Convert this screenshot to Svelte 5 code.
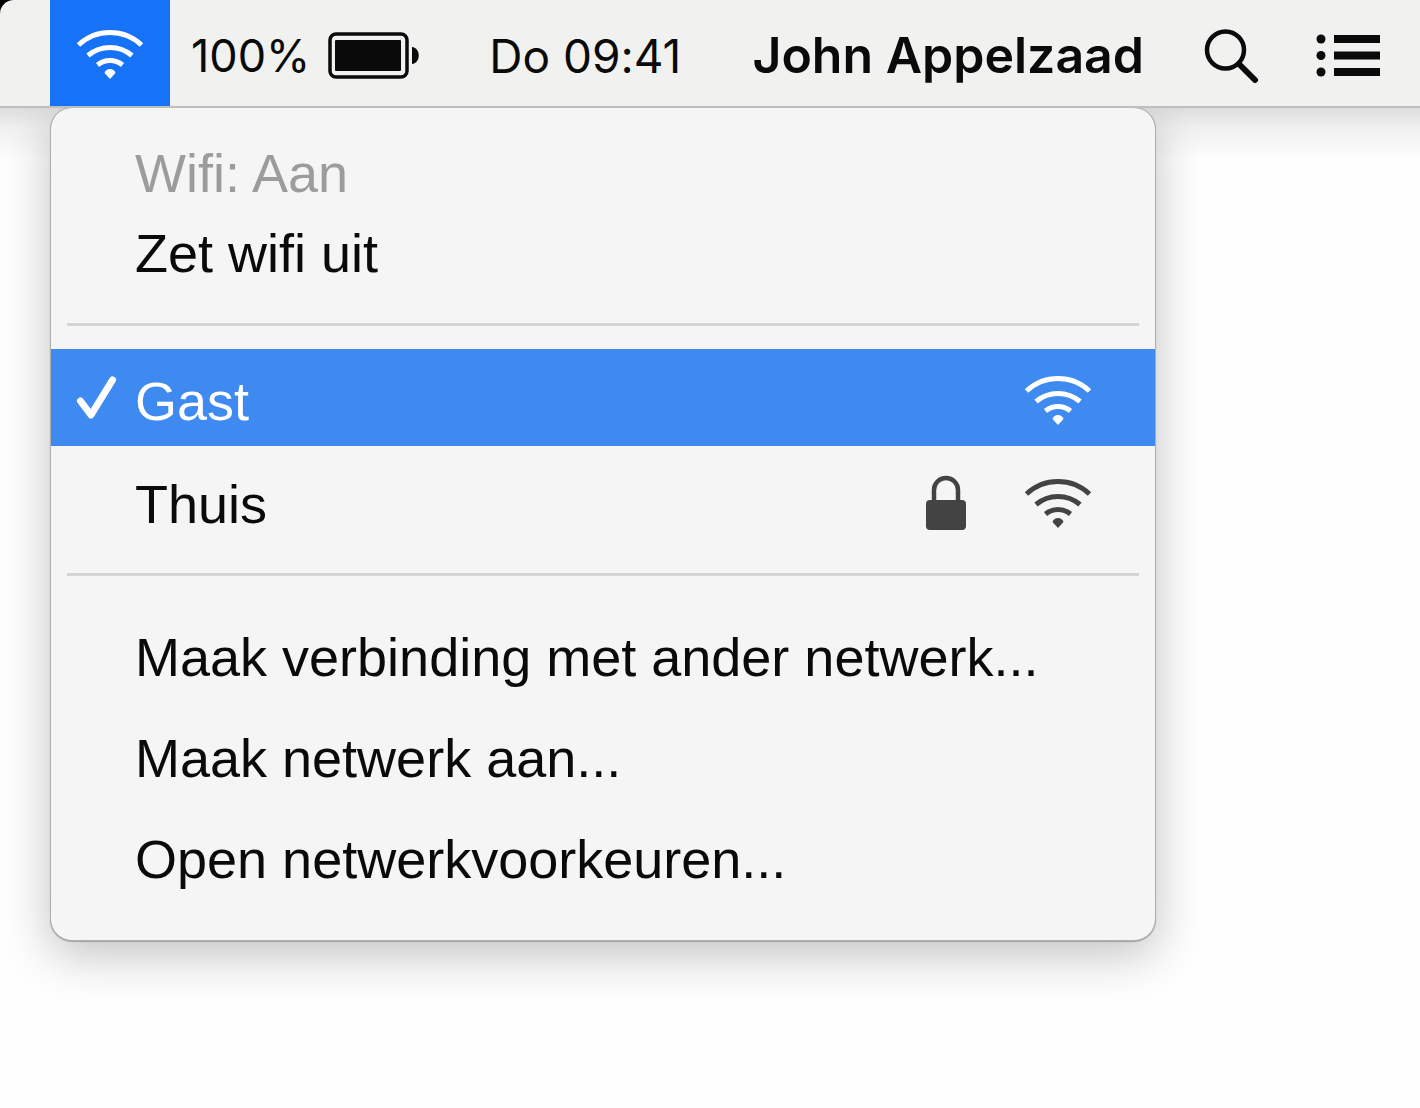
<style>
  :global(body) {
    margin: 0;
    background: #fefefe;
  }

  .screen {
    color: #0a0a0a;
    font-family: "Liberation Sans", Arial, sans-serif;
    font-variant-ligatures: none;
  }

  button {
    margin: 0;
    padding: 0;
    border: 0;
    background: none;
    color: inherit;
    font: inherit;
    text-align: left;
    cursor: default;
  }

  svg {
    display: block;
    flex: none;
  }

  .bezel {
    background: #000;
  }

  .bar {
    display: flex;
    align-items: center;
    height: 106px;
    padding: 0 38px 0 50px;
    border-bottom: 2px solid #bebebe;
    border-top-left-radius: 14px;
    background: #f1f1f0;
    font-family: Inter, "Liberation Sans", sans-serif;
    font-size: 46px;
    white-space: nowrap;
  }

  .bar button {
    display: flex;
    align-items: center;
    box-sizing: border-box;
    height: 100%;
    padding-top: 5px;
  }

  .bar .wifi {
    justify-content: center;
    width: 120px;
    padding-top: 2px;
    background: #1673f7;
    color: #fff;
  }

  .bar .battery {
    gap: 18px;
    margin-left: 21px;
  }

  .bar .charge {
    font-size: 45px;
  }

  .bar .clock {
    margin-left: 69px;
  }

  .bar .user {
    margin-left: auto;
    padding-top: 3px;
    font-size: 50px;
    font-weight: 600;
  }

  .bar .search {
    margin-left: 60px;
  }

  .bar .list {
    margin-left: 56px;
  }

  .desktop {
    overflow: hidden;
    padding: 0 264px 120px 50px;
    background: linear-gradient(#dedede, #f0f0f0 20px, #fefefe 52px);
  }

  .menu {
    margin-top: -1px;
    padding: 26px 0 30px;
    border: 1px solid #b0b0b0;
    border-radius: 22px;
    background: #f5f5f5;
    background-clip: padding-box;
    box-shadow: 0 1px 1px rgba(0, 0, 0, .25), 0 14px 48px rgba(0, 0, 0, .24);
    font-size: 54px;
    line-height: 64px;
  }

  .menu ul {
    margin: 0;
    padding: 0;
    list-style: none;
  }

  .menu hr {
    height: 3px;
    margin: 29px 16px 23px;
    border: 0;
    background: #d4d4d4;
  }

  .menu .networks + hr {
    margin: 17px 16px 31px;
  }

  .row {
    display: flex;
    align-items: center;
    box-sizing: border-box;
    width: 100%;
    height: 80px;
    padding-right: 63px;
  }

  .mark {
    flex: none;
    width: 60px;
    margin-left: 24px;
  }

  .label {
    flex: 1;
    padding-bottom: 2px;
  }

  .icons {
    display: flex;
    align-items: center;
    gap: 57px;
    color: #434343;
  }

  .row:disabled {
    color: #9c9c9c;
  }

  .networks .row {
    height: 110px;
    padding-top: 4px;
  }

  .networks .label {
    padding: 2px 0 0;
  }

  .networks .row.selected {
    height: 97px;
    background: #3e8af0;
    color: #fff;
  }

  .selected .icons {
    color: #fff;
  }

  .actions .row {
    height: 101px;
  }
</style>

<script>
  const networks = [
    { name: 'Gast', locked: false },
    { name: 'Thuis', locked: true },
  ];

  const actions = [
    'Maak verbinding met ander netwerk...',
    'Maak netwerk aan...',
    'Open netwerkvoorkeuren...',
  ];

  let current = $state('Gast');
</script>

{#snippet wifiIcon()}
  <svg width="68" height="52" viewBox="0 0 68 52" fill="none" stroke="currentColor" stroke-width="5" aria-hidden="true">
    <path d="M2.500 17A46 46 0 0 1 65.500 17" />
    <path d="M12 27.500A34 34 0 0 1 56 27.500" />
    <path d="M21.500 37A20 20 0 0 1 46.500 37" />
    <path d="M28.500 45Q30 41 34 41Q38 41 39.500 45L34 51Z" fill="currentColor" stroke="none" />
  </svg>
{/snippet}

<div class="screen">
  <div class="bezel">
    <header class="bar">
      <button class="wifi" aria-label="Wifi" aria-expanded="true">
        {@render wifiIcon()}
      </button>
      <button class="battery">
        <span class="charge">100%</span>
        <svg width="92" height="48" viewBox="0 0 92 48" aria-hidden="true">
          <rect x="2" y="2" width="77" height="43" rx="6" fill="none" stroke="currentColor" stroke-width="3.500" />
          <rect x="7" y="8" width="66" height="31" rx="1" fill="currentColor" />
          <path d="M84 15C93 16 93 31 84 32Z" fill="currentColor" />
        </svg>
      </button>
      <button class="clock">Do 09:41</button>
      <button class="user">John Appelzaad</button>
      <button class="search" aria-label="Zoek">
        <svg width="56" height="56" viewBox="0 0 56 56" fill="none" stroke="currentColor" aria-hidden="true">
          <circle cx="21.500" cy="22" r="18.500" stroke-width="4.500" />
          <path d="M35 36L51 52" stroke-width="6" stroke-linecap="round" />
        </svg>
      </button>
      <button class="list" aria-label="Berichtencentrum">
        <svg width="66" height="44" viewBox="0 0 66 44" fill="currentColor" aria-hidden="true">
          <circle cx="5" cy="5" r="4.500" />
          <circle cx="5" cy="21.500" r="4.500" />
          <circle cx="5" cy="38" r="4.500" />
          <path d="M18 1H64V9H18ZM18 17.500H64V25.500H18ZM18 34H64V42H18Z" />
        </svg>
      </button>
    </header>
  </div>

  <main class="desktop">
    <nav class="menu">
      <ul>
        <li><button class="row" disabled><span class="mark"></span><span class="label">Wifi: Aan</span></button></li>
        <li><button class="row"><span class="mark"></span><span class="label">Zet wifi uit</span></button></li>
      </ul>
      <hr />
      <ul class="networks">
        {#each networks as network}
          <li>
            <button class="row" class:selected={current === network.name} onclick={() => current = network.name}>
              <span class="mark">
                {#if current === network.name}
                  <svg width="44" height="50" viewBox="0 0 44 50" fill="none" stroke="currentColor" stroke-width="7" stroke-linecap="round" stroke-linejoin="round" aria-hidden="true">
                    <path d="M5.500 26L16 40L37.500 5" />
                  </svg>
                {/if}
              </span>
              <span class="label">{network.name}</span>
              <span class="icons">
                {#if network.locked}
                  <svg width="42" height="56" viewBox="0 0 42 56" aria-hidden="true">
                    <path d="M9 26V15A12 12 0 0 1 33 15V26" fill="none" stroke="currentColor" stroke-width="4.500" />
                    <rect x="1" y="25" width="40" height="30" rx="4" fill="currentColor" />
                  </svg>
                {/if}
                {@render wifiIcon()}
              </span>
            </button>
          </li>
        {/each}
      </ul>
      <hr />
      <ul class="actions">
        {#each actions as action}
          <li><button class="row"><span class="mark"></span><span class="label">{action}</span></button></li>
        {/each}
      </ul>
    </nav>
  </main>
</div>
